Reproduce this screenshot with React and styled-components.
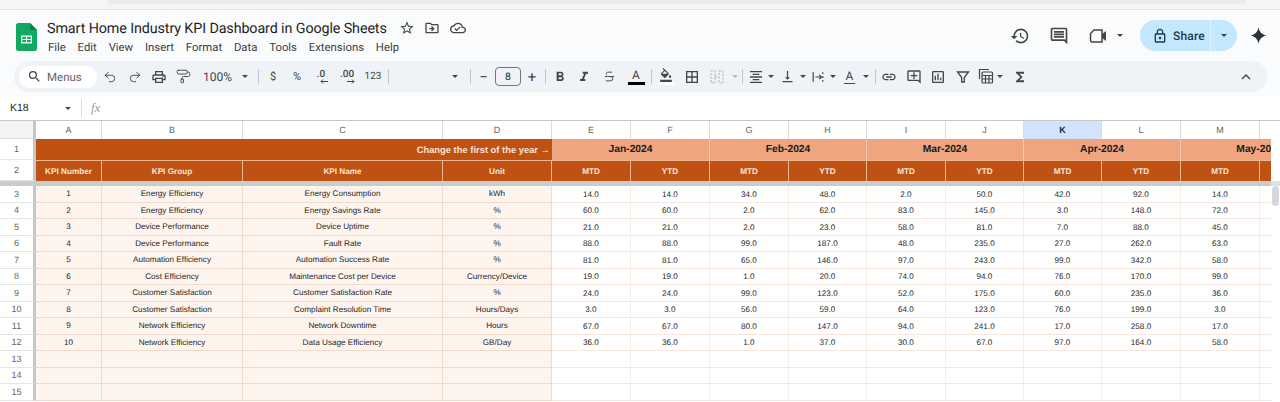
import React from "react";
import styled, { createGlobalStyle } from "styled-components";
import { PaintRoller, Redo2, Strikethrough, Undo2 } from "lucide-react";
import {
  MdBorderAll,
  MdExpandLess,
  MdFormatAlignCenter,
  MdFormatBold,
  MdFormatColorFill,
  MdFormatItalic,
  MdFunctions,
  MdHistory,
  MdLink,
  MdOutlineAddComment,
  MdOutlineCloudDone,
  MdOutlineDriveFileMove,
  MdOutlineInsertChart,
  MdOutlineInsertComment,
  MdOutlineLock,
  MdOutlinePrint,
  MdSearch,
  MdStarBorder,
  MdVerticalAlignBottom,
} from "react-icons/md";

const GlobalStyle = createGlobalStyle`
  html, body {
    margin: 0;
    padding: 0;
    background: #fff;
  }
  * {
    box-sizing: border-box;
  }
`;

const Page = styled.div`
  width: 1280px;
  height: 402px;
  overflow: hidden;
  background: #fff;
  font-family: "Liberation Sans", Arial, sans-serif;
  color: #1f1f1f;
  text-rendering: geometricPrecision;
`;

const BrowserEdge = styled.div`
  height: 10px;
  background: #f4f5f7;
  border-bottom: 1px solid #e4e5e7;
`;

const Omnibox = styled.div`
  width: 1138px;
  height: 4px;
  margin-left: 108px;
  background: #e8eaec;
  border-radius: 0 0 10px 10px;
`;

const Chrome = styled.header`
  height: 86px;
  background: #f9fbfd;
`;

const TitleBar = styled.div`
  height: 51px;
  display: flex;
  align-items: flex-start;
  padding: 8px 0 0 16px;
`;

const Logo = styled.svg`
  width: 21px;
  height: 28px;
  margin-top: 5px;
  flex: none;
`;

const TitleColumn = styled.div`
  margin-left: 10px;
  font-family: Roboto, "Open Sans", sans-serif;
`;

const TitleRow = styled.div`
  display: flex;
  align-items: center;
  height: 20px;
`;

const DocTitle = styled.div`
  flex: none;
  font-size: 14.35px;
  letter-spacing: -0.12px;
  color: #1f1f1f;
  width: 340px;
  white-space: nowrap;
`;

const TitleIcon = styled.span`
  flex: none;
  width: 25.5px;
  display: flex;
  justify-content: center;
  color: #444746;
  font-size: 16px;
  margin-left: ${({ $first }) => ($first ? "7px" : "0")};
`;

const MenuBar = styled.nav`
  display: flex;
  gap: 11.8px;
  margin-top: 1px;
  padding-left: 1px;
  font-size: 11.35px;
  line-height: 16px;
  color: #3c4043;
`;

const Actions = styled.div`
  margin-left: auto;
  display: flex;
  align-items: center;
  height: 31px;
  margin-top: 2px;
`;

const ActionIcon = styled.span`
  width: ${({ $w }) => $w}px;
  display: flex;
  justify-content: center;
  align-items: center;
  color: #444746;
  font-size: 20px;
`;

const ShareGroup = styled.div`
  width: 97px;
  height: 31px;
  margin-left: 17px;
  display: flex;
  border-radius: 16px;
  overflow: hidden;
  background: #c2e7ff;
  font-family: Roboto, sans-serif;
  color: #1f3a4d;
`;

const ShareMain = styled.div`
  width: 71px;
  display: flex;
  align-items: center;
  gap: 5px;
  padding-left: 12px;
  font-size: 12px;
  font-weight: 500;
  letter-spacing: 0.2px;
  border-right: 1px solid #e2f3ff;
  svg {
    font-size: 16px;
  }
`;

const ShareCaret = styled.div`
  flex: 1;
  display: flex;
  justify-content: center;
  align-items: center;
`;

const Spark = styled.svg`
  width: 17px;
  height: 17px;
  margin: 0 13px 0 13px;
`;

const Toolbar = styled.div`
  width: 1253px;
  height: 31px;
  margin-left: 14px;
  padding-left: 5px;
  display: flex;
  align-items: center;
  background: #eff3f8;
  border-radius: 16px;
  color: #444746;
  font-family: Roboto, "Liberation Sans", sans-serif;
`;

const SearchPill = styled.div`
  width: 78px;
  height: 22px;
  margin-right: 1px;
  display: flex;
  align-items: center;
  gap: 5px;
  padding-left: 8px;
  background: #fff;
  border-radius: 11px;
  font-size: 11.5px;
  color: #5f6368;
  svg {
    font-size: 15px;
    color: #444746;
  }
`;

const Tool = styled.span`
  flex: none;
  width: ${({ $w = 24.5 }) => $w}px;
  height: 22px;
  display: flex;
  align-items: center;
  justify-content: ${({ $pad }) => ($pad ? "space-between" : "center")};
  padding: ${({ $pad }) => ($pad ? `0 ${$pad}px 0 7px` : "0")};
  font-size: ${({ $size = 16 }) => $size}px;
  color: ${({ $muted }) => ($muted ? "#b4b7bb" : "#444746")};
`;

const ToolText = styled.span`
  font-size: ${({ $size = 12 }) => $size}px;
  color: #444746;
`;

const Caret = styled.i`
  display: block;
  flex: none;
  width: 0;
  height: 0;
  border-left: 3px solid transparent;
  border-right: 3px solid transparent;
  border-top: 3px solid ${({ $muted }) => ($muted ? "#b4b7bb" : "#444746")};
`;

const Separator = styled.i`
  display: block;
  flex: none;
  width: 1px;
  height: 15px;
  margin: 0 1.5px 0 ${({ $left = 1.5 }) => $left}px;
  background: #c7c7c7;
`;

const FontSizeBox = styled.div`
  width: 26px;
  height: 19px;
  flex: none;
  display: flex;
  align-items: center;
  justify-content: center;
  border: 1px solid #747775;
  border-radius: 4px;
  font-size: 10.5px;
  color: #1f1f1f;
`;

const Decimal = styled.span`
  display: flex;
  flex-direction: column;
  align-items: center;
  line-height: 9px;
  font-size: 10px;
  font-weight: 500;
  svg {
    display: block;
    width: 8px;
    height: 5px;
    margin-left: ${({ $nudge }) => $nudge}px;
  }
`;

const ColorBar = styled.span`
  display: flex;
  flex-direction: column;
  align-items: center;
  font-size: ${({ $size = 12 }) => $size}px;
  line-height: 13px;
  color: #444746;
  &::after {
    content: "";
    display: block;
    width: ${({ $w = 17 }) => $w}px;
    height: ${({ $h = 3 }) => $h}px;
    background: ${({ $color }) => $color};
  }
`;

const RightSpacer = styled.div`
  margin-left: auto;
  width: 30px;
  display: flex;
  justify-content: flex-start;
  font-size: 18px;
`;

const FormulaBar = styled.div`
  height: 25px;
  display: flex;
  align-items: center;
  background: #fff;
  border-bottom: 1px solid #c7c7c7;
`;

const NameBox = styled.div`
  width: 82px;
  height: 18px;
  padding: 0 10px;
  display: flex;
  align-items: center;
  justify-content: space-between;
  border-right: 1px solid #dadce0;
  font-size: 10.5px;
  color: #1f1f1f;
`;

const Fx = styled.span`
  margin-left: 9px;
  font-family: "Liberation Serif", serif;
  font-style: italic;
  font-size: 13px;
  color: #9aa0a6;
`;

const SheetArea = styled.div`
  display: flex;
  align-items: flex-start;
  height: 281px;
  overflow: hidden;
`;

const GridClip = styled.div`
  width: 1271px;
  flex: none;
  overflow: hidden;
`;

const Grid = styled.div`
  width: 1339px;
  display: grid;
  grid-template-columns: 36px 66px 141px 200px 109px 79px 79px 79px 78px 79px 78px 78px 79px 79px 79px;
  grid-template-rows: 18px 21px 21px 5px repeat(13, 16.5px);
`;

const CellBase = styled.div`
  display: flex;
  align-items: center;
  justify-content: center;
  white-space: nowrap;
  overflow: hidden;
`;

const Corner = styled(CellBase)`
  background: #f1f3f4;
  border-right: 3px solid #c4c7c9;
  border-bottom: 1px solid #dadce0;
`;

const ColHead = styled(CellBase)`
  background: ${({ $active }) => ($active ? "#d3e3fd" : "#fff")};
  color: ${({ $active }) => ($active ? "#0b2f63" : "#666")};
  font-weight: ${({ $active }) => ($active ? 700 : 400)};
  font-size: 9px;
  border-right: 1px solid #dadce0;
`;

const RowHead = styled(CellBase)`
  background: #fff;
  color: #666;
  font-size: 9px;
  border-right: 3px solid #c4c7c9;
  border-bottom: 1px solid #e3e5e7;
`;

const Banner = styled(CellBase)`
  grid-column: span 4;
  justify-content: flex-end;
  padding-right: 2px;
  background: #bf5213;
  color: #fbe3d3;
  font-size: 9.4px;
  font-weight: 700;
`;

const MonthCell = styled(CellBase)`
  grid-column: span 2;
  background: #efa57f;
  color: #1a1a1a;
  font-size: 10.3px;
  font-weight: 700;
  border-right: 1px solid #f6c8ae;
`;

const HeadCell = styled(CellBase)`
  background: #bf5213;
  color: #fbe3d3;
  font-size: 8.2px;
  font-weight: 700;
  border-top: 1px solid #f0b690;
  border-right: 1px solid #f0b690;
`;

const FreezeBar = styled.div`
  grid-column: 1 / -1;
  background: #c9cbcd;
`;

const InfoCell = styled(CellBase)`
  background: #fdf4ee;
  color: #1f1f1f;
  font-size: 8.15px;
  border-right: 1px solid #efdacc;
  border-bottom: 1px solid #efdacc;
`;

const ValueCell = styled(CellBase)`
  background: #fff;
  color: #1f1f1f;
  font-size: 8.15px;
  padding-top: 1px;
  border-right: 1px solid #f8ece4;
  border-bottom: 1px solid #f6e6db;
`;

const ScrollColumn = styled.div`
  flex: 1;
  align-self: stretch;
  display: flex;
  flex-direction: column;
  padding-top: 60px;
  background: #fff;
`;

const ScrollDivider = styled.div`
  height: 5px;
  background: #dfe1e3;
`;

const ScrollThumb = styled.div`
  width: 7px;
  height: 20px;
  margin: 0 0 0 1px;
  background: #d5d7da;
  border-radius: 4px;
`;

const menus = ["File", "Edit", "View", "Insert", "Format", "Data", "Tools", "Extensions", "Help"];
// N is scrolled almost out of view, so its label and header never show
const columns = ["A", "B", "C", "D", "E", "F", "G", "H", "I", "J", "K", "L", "M", ""];
const months = ["Jan-2024", "Feb-2024", "Mar-2024", "Apr-2024", "May-2024"];
const headers = ["KPI Number", "KPI Group", "KPI Name", "Unit"];
const periods = ["MTD", "YTD", "MTD", "YTD", "MTD", "YTD", "MTD", "YTD", "MTD", ""];

const kpis = [
  ["Energy Efficiency", "Energy Consumption", "kWh", [14, 14, 34, 48, 2, 50, 42, 92, 14]],
  ["Energy Efficiency", "Energy Savings Rate", "%", [60, 60, 2, 62, 83, 145, 3, 148, 72]],
  ["Device Performance", "Device Uptime", "%", [21, 21, 2, 23, 58, 81, 7, 88, 45]],
  ["Device Performance", "Fault Rate", "%", [88, 88, 99, 187, 48, 235, 27, 262, 63]],
  ["Automation Efficiency", "Automation Success Rate", "%", [81, 81, 65, 146, 97, 243, 99, 342, 58]],
  ["Cost Efficiency", "Maintenance Cost per Device", "Currency/Device", [19, 19, 1, 20, 74, 94, 76, 170, 99]],
  ["Customer Satisfaction", "Customer Satisfaction Rate", "%", [24, 24, 99, 123, 52, 175, 60, 235, 36]],
  ["Customer Satisfaction", "Complaint Resolution Time", "Hours/Days", [3, 3, 56, 59, 64, 123, 76, 199, 3]],
  ["Network Efficiency", "Network Downtime", "Hours", [67, 67, 80, 147, 94, 241, 17, 258, 17]],
  ["Network Efficiency", "Data Usage Efficiency", "GB/Day", [36, 36, 1, 37, 30, 67, 97, 164, 58]],
];

const SheetsLogo = () => (
  <Logo viewBox="0 0 21 28">
    <path d="M2.5 0H14l7 7v18.5a2.5 2.5 0 0 1-2.5 2.5h-16A2.5 2.5 0 0 1 0 25.500V2.500A2.500 2.500 0 0 1 2.500 0z" fill="#11a861" />
    <path d="M14 0l7 7h-7z" fill="#0b8043" />
    <path d="M5 12.500h11v8H5z" fill="#fff" />
    <path d="M6.300 13.800h3.600v2.100H6.300zM11.100 13.800h3.600v2.100h-3.600zM6.300 17.100h3.600v2.100H6.300zM11.100 17.100h3.600v2.100h-3.600z" fill="#11a861" />
  </Logo>
);

const MeetIcon = () => (
  <svg width="20" height="16" viewBox="0 0 20 16" fill="none">
    <path d="M5 2h8v12H3a1.500 1.500 0 0 1-1.500-1.500V5.500z" stroke="#444746" strokeWidth="1.500" />
    <path d="M13 6l4-3v10l-4-3z" fill="#444746" />
  </svg>
);

const MergeIcon = () => (
  <svg width="16" height="16" viewBox="0 0 16 16" fill="none" stroke="#b4b7bb" strokeWidth="1.200" strokeDasharray="2 1.500">
    <path d="M2 2h4v12H2zM10 2h4v12h-4zM6 8h4" />
  </svg>
);

const WrapIcon = () => (
  <svg width="14" height="14" viewBox="0 0 16 16" fill="none" stroke="#444746" strokeWidth="1.400">
    <path d="M2.500 2.500v11M13.500 2.500v2M13.500 7v2M13.500 11.500v2M5 8h7M9.500 5.500L12 8l-2.500 2.500" />
  </svg>
);

const FilterIcon = () => (
  <svg width="16" height="16" viewBox="0 0 16 16" fill="none" stroke="#444746" strokeWidth="1.300">
    <path d="M2.500 3h11L9.300 8.500V13H6.700V8.500z" />
  </svg>
);

const FunctionTableIcon = () => (
  <svg width="16" height="17" viewBox="0 0 16 17" fill="none" stroke="#444746" strokeWidth="1.200">
    <path d="M1.500 11V1.500H11" />
    <rect x="4" y="4" width="10.500" height="11" rx="1" />
    <path d="M4 7.500h10.500M4 11h10.500M7.500 7.500V15M11 7.500V15" />
  </svg>
);

const DecimalArrow = ({ left }) => (
  <svg viewBox="0 0 8 5" fill="none" stroke="#444746" strokeWidth="1">
    {left ? <path d="M8 2.500H1M3 .5l-2 2 2 2" /> : <path d="M0 2.500h7M5 .5l2 2-2 2" />}
  </svg>
);

const TitleSection = () => (
  <TitleBar>
    <SheetsLogo />
    <TitleColumn>
      <TitleRow>
        <DocTitle>Smart Home Industry KPI Dashboard in Google Sheets</DocTitle>
        <TitleIcon $first><MdStarBorder /></TitleIcon>
        <TitleIcon><MdOutlineDriveFileMove /></TitleIcon>
        <TitleIcon><MdOutlineCloudDone /></TitleIcon>
      </TitleRow>
      <MenuBar>
        {menus.map((m) => (
          <span key={m}>{m}</span>
        ))}
      </MenuBar>
    </TitleColumn>
    <Actions>
      <ActionIcon $w={34}><MdHistory /></ActionIcon>
      <ActionIcon $w={44}><MdOutlineInsertComment /></ActionIcon>
      <ActionIcon $w={36}><MeetIcon /></ActionIcon>
      <Caret />
      <ShareGroup>
        <ShareMain>
          <MdOutlineLock />
          Share
        </ShareMain>
        <ShareCaret><Caret /></ShareCaret>
      </ShareGroup>
      <Spark viewBox="0 0 17 17">
        <path d="M8.500 0c.6 4.700 3.300 7.900 8.500 8.500-5.200.6-7.900 3.800-8.500 8.500C7.900 12.300 5.200 9.100 0 8.500 5.200 7.900 7.900 4.700 8.500 0z" fill="#2f3337" />
      </Spark>
    </Actions>
  </TitleBar>
);

const ToolbarSection = () => (
  <Toolbar>
    <SearchPill>
      <MdSearch />
      Menus
    </SearchPill>
    <Tool><Undo2 size={14} strokeWidth={1.6} /></Tool>
    <Tool><Redo2 size={14} strokeWidth={1.6} /></Tool>
    <Tool><MdOutlinePrint /></Tool>
    <Tool><PaintRoller size={15} strokeWidth={1.5} /></Tool>
    <Tool $w={60} $pad={8}>
      <ToolText $size={12}>100%</ToolText>
      <Caret />
    </Tool>
    <Separator />
    <Tool $w={26}><ToolText $size={11}>$</ToolText></Tool>
    <Tool $w={22}><ToolText $size={11}>%</ToolText></Tool>
    <Tool $w={26}>
      <Decimal $nudge={5}>.0<DecimalArrow left /></Decimal>
    </Tool>
    <Tool $w={26}>
      <Decimal $nudge={7}>.00<DecimalArrow /></Decimal>
    </Tool>
    <Tool $w={26}><ToolText $size={10}>123</ToolText></Tool>
    <Separator />
    <Tool $w={78} $pad={10}>
      <span />
      <Caret />
    </Tool>
    <Separator />
    <Tool $w={23}><ToolText $size={15}>−</ToolText></Tool>
    <FontSizeBox>8</FontSizeBox>
    <Tool $w={22}><ToolText $size={15}>+</ToolText></Tool>
    <Separator />
    <Tool $w={26}><MdFormatBold /></Tool>
    <Tool $w={22}><MdFormatItalic /></Tool>
    <Tool $w={28}><Strikethrough size={13} strokeWidth={1.7} /></Tool>
    <Tool $w={26}><ColorBar $color="#000">A</ColorBar></Tool>
    <Separator />
    <Tool $w={26}>
      <ColorBar $color="#fff" $size={14}><MdFormatColorFill /></ColorBar>
    </Tool>
    <Tool $w={26}><MdBorderAll /></Tool>
    <Tool $w={24} $muted><MergeIcon /></Tool>
    <Tool $w={11}><Caret $muted /></Tool>
    <Separator />
    <Tool $w={24}><MdFormatAlignCenter /></Tool>
    <Tool $w={6}><Caret /></Tool>
    <Tool $w={26} $size={15}><MdVerticalAlignBottom /></Tool>
    <Tool $w={6}><Caret /></Tool>
    <Tool $w={24}><WrapIcon /></Tool>
    <Tool $w={6}><Caret /></Tool>
    <Tool $w={27}><ColorBar $color="#444746" $h={1} $w={11}>A</ColorBar></Tool>
    <Tool $w={6}><Caret /></Tool>
    <Separator $left={5.5} />
    <Tool $w={24}><MdLink /></Tool>
    <Tool $w={25}><MdOutlineAddComment /></Tool>
    <Tool $w={24}><MdOutlineInsertChart /></Tool>
    <Tool $w={25}><FilterIcon /></Tool>
    <Tool $w={22}><FunctionTableIcon /></Tool>
    <Tool $w={6}><Caret /></Tool>
    <Tool $w={34}><MdFunctions /></Tool>
    <RightSpacer><MdExpandLess /></RightSpacer>
  </Toolbar>
);

const App = () => (
  <Page>
    <GlobalStyle />
    <BrowserEdge>
      <Omnibox />
    </BrowserEdge>
    <Chrome>
      <TitleSection />
      <ToolbarSection />
    </Chrome>
    <FormulaBar>
      <NameBox>
        K18
        <Caret />
      </NameBox>
      <Fx>fx</Fx>
    </FormulaBar>
    <SheetArea>
      <GridClip>
        <Grid>
          <Corner />
          {columns.map((c, i) => (
            <ColHead key={i} $active={c === "K"}>{c}</ColHead>
          ))}

          <RowHead>1</RowHead>
          <Banner>Change the first of the year →</Banner>
          {months.map((m) => (
            <MonthCell key={m}>{m}</MonthCell>
          ))}

          <RowHead>2</RowHead>
          {headers.map((h) => (
            <HeadCell key={h}>{h}</HeadCell>
          ))}
          {periods.map((p, i) => (
            <HeadCell key={i}>{p}</HeadCell>
          ))}

          <FreezeBar />

          {Array.from({ length: 13 }, (_, r) => {
            const kpi = kpis[r];
            return (
              <React.Fragment key={r}>
                <RowHead>{r + 3}</RowHead>
                <InfoCell>{kpi ? r + 1 : ""}</InfoCell>
                <InfoCell>{kpi ? kpi[0] : ""}</InfoCell>
                <InfoCell>{kpi ? kpi[1] : ""}</InfoCell>
                <InfoCell>{kpi ? kpi[2] : ""}</InfoCell>
                {Array.from({ length: 10 }, (_, c) => (
                  <ValueCell key={c}>
                    {kpi && c < 9 ? kpi[3][c].toFixed(1) : ""}
                  </ValueCell>
                ))}
              </React.Fragment>
            );
          })}
        </Grid>
      </GridClip>
      <ScrollColumn>
        <ScrollDivider />
        <ScrollThumb />
      </ScrollColumn>
    </SheetArea>
  </Page>
);

export default App;
